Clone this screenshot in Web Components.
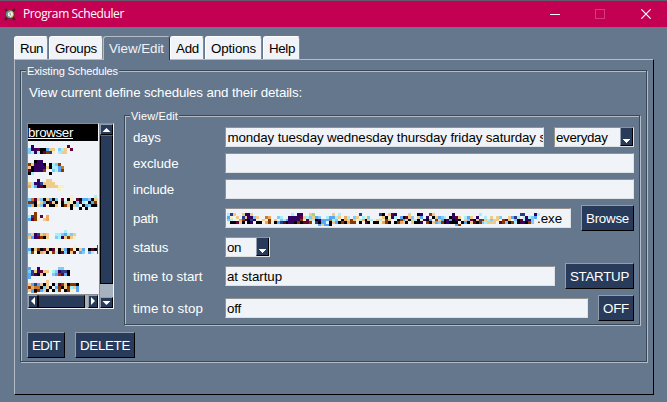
<!DOCTYPE html>
<html lang="en"><head><meta charset="utf-8"><title>Program Scheduler</title>
<style>
html,body{margin:0;height:100%;overflow:hidden}
body{background:#64778d;font:13.33px/16px "Liberation Sans",Arial,sans-serif;color:#fff}
</style></head><body>
<scheduler-window></scheduler-window>
<script>
const define=(name,html,ready)=>customElements.define(name,class extends HTMLElement{
  connectedCallback(){
    if(this.shadowRoot)return;
    this.attachShadow({mode:'open'}).innerHTML='<style>*{box-sizing:border-box}:host{box-sizing:border-box}</style>'+html;
    if(ready)ready(this,this.shadowRoot);
  }
});

// Text whose letter spacing is tuned to a given advance width
define('fit-text','<style>:host{display:inline-block;white-space:pre;flex:none}</style><span><slot></slot></span>',(h,r)=>{
  const s=r.querySelector('span'),w=+h.getAttribute('w'),n=h.textContent.length;
  if(w)s.style.letterSpacing=((w-s.getBoundingClientRect().width)/n)+'px';
});

// Coarse coloured blocks covering private names
const COLORS={k:'#000',p:'#320062',m:'#640032',b:'#8a3800',o:'#f0a860',t:'#f0cc88',y:'#f7f0c4',c:'#a8f0f8',s:'#58a8f8',n:'#283c88',g:'#a8d088',l:'#80ccf8',w:'#c87830'};
define('pixel-mosaic','<style>:host{display:block;flex:none}svg{display:block}</style>',(h,r)=>{
  const rows=h.getAttribute('rows').split('|'),ch=+(h.getAttribute('cell')||3);
  const W=Math.max(...rows.map(x=>x.length))*3,H=rows.length*ch;
  let s='';
  rows.forEach((row,y)=>[...row].forEach((c,x)=>{if(COLORS[c])s+=`<rect x="${x*3}" y="${y*ch}" width="3" height="${ch}" fill="${COLORS[c]}"/>`}));
  r.innerHTML+=`<svg width="${h.getAttribute('w')||W}" height="${H}" viewBox="0 0 ${W} ${H}" preserveAspectRatio="none" shape-rendering="crispEdges">${s}</svg>`;
});

define('title-bar',`<style>
:host{display:flex;height:27px;background:#c30052;border-top:1px solid #63596d;align-items:center;padding:0 16px 0 4px;font:12px/16px "Open Sans","Noto Sans",sans-serif}
.icon{margin-right:7px;margin-top:1px}.sp{flex:1}.ctl{margin-left:35px;flex:none}
</style>
<svg class="icon" width="12" height="13" viewBox="0 0 12 13"><path d="M1 1l3 3M11 1L8 4M1 12l3-3M11 12L8 9" stroke="#5b1434" stroke-width="2.4"/><circle cx="6" cy="6.3" r="4.6" fill="#50443a"/><circle cx="6" cy="6.3" r="3.7" fill="#d3bd50"/><path d="M2.3 6.3a3.7 3.7 0 0 1 3.7-3.7v7.4a3.7 3.7 0 0 1-3.7-3.7" fill="#4f93a3"/><circle cx="6.3" cy="6.3" r="2.5" fill="#f4f4f4"/><path d="M6 4.5v2l1.2 1" fill="none" stroke="#555" stroke-width=".8"/></svg>
<fit-text w="101">Program Scheduler</fit-text><span class="sp"></span>
<svg class="ctl" width="10" height="10"><path d="M0 5.5h10" stroke="#fff" shape-rendering="crispEdges"/></svg>
<svg class="ctl" width="10" height="10"><path d="M.5 .5h9v9h-9z" fill="none" stroke="#d43b7a" shape-rendering="crispEdges"/></svg>
<svg class="ctl" style="margin-left:36px" width="10" height="10"><path d="M.3 .3l9.4 9.4M9.7 .3L.3 9.7" stroke="#fff" stroke-width="1.2"/></svg>`);

define('note-tab',`<style>
:host{display:flex;height:23px;padding:1px 5px 0;align-items:center;background:#f0f3f7;color:#000;border:1px solid #fff;border-right-color:#858b92;border-bottom:0;border-radius:3px 3px 0 0;flex:none}
:host([active]){height:24px;margin-bottom:-1px;background:#64778d;color:#f0f3f7;border-color:#b2bbc6;border-right-color:#29323d;position:relative;padding-bottom:1px}
</style><slot></slot>`);

define('group-frame',`<style>
:host{display:block;border:1px solid #3b4855;box-shadow:inset 1px 1px #b2bbc6,1px 1px #b2bbc6}
.legend{font-size:11px;line-height:12px;height:12px;width:max-content;margin:-6px 0 0 5px;background:#64778d;padding:0 1px}
</style><div class="legend"><slot name="legend"></slot></div><slot></slot>`);

define('text-field',`<style>
:host{display:flex;align-items:center;height:20px;flex:1;min-width:0;overflow:hidden;background:#f0f3f7;color:#000;border:1px solid #929292;border-right-color:#dfe2e5;border-bottom-color:#dfe2e5;padding-left:1px}
::slotted(fit-text){margin-top:2px}
</style><slot></slot>`);

define('drop-down',`<style>
:host{display:flex;align-items:center;height:20px;flex:none;background:#f0f3f7;color:#000;border:1px solid #929292;border-right-color:#dfe2e5;border-bottom-color:#dfe2e5;padding-left:1px}
::slotted(fit-text){margin-top:2px}
.b{margin-left:auto;width:13px;height:18px;background:#283b5b;border-left:1px solid #939dac;border-right:1px solid #000;border-bottom:1px solid #000}
svg{display:block}
</style><slot></slot><span class="b"><svg width="11" height="17" shape-rendering="crispEdges"><path d="M2 11h7v1h-1v1h-1v1h-1v1h-1v-1h-1v-1h-1v-1h-1z" fill="#fff"/></svg></span>`);

define('push-button',`<style>
:host{display:flex;align-items:center;height:26px;padding:0 4px;flex:none;background:#283b5b;color:#fff;border:1px solid #939dac;border-right-color:#000;border-bottom-color:#000}
::slotted(fit-text){margin-top:2px}
</style><slot></slot>`);

define('form-row',`<style>
:host{display:flex;align-items:center;gap:10px}
.label{width:92px;height:16px;margin:2px -10px 0 0;flex:none;display:flex}
</style><span class="label"><slot name="label"></slot></span><slot></slot>`);

define('scroll-bar',`<style>
:host{display:flex;background:#a6b2be;border:1px solid #8b8d91;border-right-color:#f0f3f7;border-bottom-color:#f0f3f7}
:host([vertical]){flex-direction:column}
i{display:block;flex:none;background:#283b5b;border:1px solid #939dac;border-right-color:#000;border-bottom-color:#000}
.thumb{border-left-color:#000;border-top-color:#5b6a82}
svg{display:block}
</style>`,(h,r)=>{
  const v=h.hasAttribute('vertical'),t=+h.getAttribute('thumb');
  const st=n=>v?`width:13px;height:${n}px`:`height:13px;width:${n}px`;
  const a=v?['<svg width="11" height="9"><path d="M1.5 7L5.5 3L9.5 7z" fill="#fff"/></svg>','<svg width="11" height="9"><path d="M1.5 3L5.5 7L9.5 3z" fill="#fff"/></svg>']
           :['<svg width="8" height="10"><path d="M6 1L2 5L6 9z" fill="#fff"/></svg>','<svg width="8" height="10"><path d="M2 1L6 5L2 9z" fill="#fff"/></svg>'];
  const e=v?11:10;
  r.innerHTML+=`<i style="${st(e)}">${a[0]}</i><i class="thumb" style="${st(t)}"></i><span style="flex:1"></span><i style="${st(e)}">${a[1]}</i>`;
});

define('schedule-list',`<style>
:host{display:grid;grid-template-columns:72px 15px;width:87px;height:186px;color:#fff}
.left{display:flex;flex-direction:column;height:186px}
.items{height:171px;background:#f0f3f7;border:1px solid #8b8d91;border-right-color:#f0f3f7;border-bottom-color:#f0f3f7;overflow:hidden}
.sel{height:17px;background:#000;line-height:18px}
.sel fit-text{text-decoration:underline;text-underline-offset:1px;text-decoration-thickness:1px}
</style>
<div class="left"><div class="items">
<div class="sel"><fit-text w="45">browser</fit-text></div>
<pixel-mosaic style="margin-top:4px" rows=".p...........m|lppmkkstt.lct.m|lcpckmbny.ctt."></pixel-mosaic>
<pixel-mosaic style="margin-top:6px" rows="..kpp.......|btpppk.kclb.|tkpppptkccsw|mkpppb..lcsb|kc.....k...."></pixel-mosaic>
<pixel-mosaic style="margin-top:4px" rows="...p..tt...|tcppntttt..|ocspmkttttyy|..........y"></pixel-mosaic>
<pixel-mosaic style="margin-top:4px" rows="..............y.......c.|lwmtlktskl.m.ky.mksslktc|bnkytskmtkykctyklmcyksby|soktlpykkt.kbtktl.kslkkl|..............k..k.k..."></pixel-mosaic>
<pixel-mosaic style="margin-top:2px" rows="..b....|cnb.m.o|smby.to"></pixel-mosaic>
<pixel-mosaic style="margin-top:9px" rows="............c...|ltpntot..cclsclt|tspmbkt..lcptbty"></pixel-mosaic>
<pixel-mosaic style="margin-top:6px" rows="...............y.......b|sktbkmtkmyktskbykts.kmkb|cbykotkybckmlktm.sl.sc.b"></pixel-mosaic>
<pixel-mosaic style="margin-top:13px" rows="s..p......ll.|lntpmtt.clpnnk|snpktk..lsbmsk|s............"></pixel-mosaic>
<pixel-mosaic style="margin-top:1px" rows="......t...........|tsnstkt.kcmbtkbbk|bowwkltk.sbktbcts|tskbstk.kcb.kby.s|.sb.............."></pixel-mosaic>
</div><scroll-bar thumb="47" style="height:15px"></scroll-bar></div>
<scroll-bar vertical thumb="149"></scroll-bar>`);

define('details-form',`<style>
:host{display:flex;flex-direction:column;gap:6px;padding:5px 5px 3px 8px}
</style>
<form-row><fit-text slot="label" w="28">days</fit-text><text-field><fit-text w="318.5" style="margin-left:.5px">monday tuesday wednesday thursday friday saturday s</fit-text></text-field><drop-down style="width:80px"><fit-text w="51.5">everyday</fit-text></drop-down></form-row>
<form-row><fit-text slot="label" w="45.5">exclude</fit-text><text-field></text-field></form-row>
<form-row><fit-text slot="label" w="41">include</fit-text><text-field></text-field></form-row>
<form-row><fit-text slot="label" w="25">path</fit-text><text-field><pixel-mosaic style="margin:3px -6px 0 0" cell="2.75" w="316" rows="cnt..tppt.............c.pp..tg......t.c......n......nk.tmp....t..kp..bt......p........c.............nn...pc|sy.t.ntpplt..wo..lc..ppppmtcltsl..cssct.oc.lt.cyl...ytkypc.skmtl.ts.p.ktslc.kpmt.cst.p..c.t.tl..tsnc.cpcls|lc..obpknp..tyb.t.lcsppppbymtckpssswcl.kotbtycoktcytcybt..kbstktckypks.btskpskpk.tlmktnbtcltt.bmt.lkmcppl|ykkmtk.kp.kk.obyksnmkppkbkmmb.nkss.ktskbkobb.k.mk.kkyobk.kbotk.tkkp.bktslbkpkkk.ksktmkblcttt.mblkbckppkbl|...............................stssk..........................................sb............................"></pixel-mosaic><fit-text w="25">.exe</fit-text></text-field><push-button><fit-text w="43">Browse</fit-text></push-button></form-row>
<form-row><fit-text slot="label" w="35.5">status</fit-text><drop-down style="width:45px"><fit-text w="14">on</fit-text></drop-down></form-row>
<form-row><fit-text slot="label" w="69.5">time to start</fit-text><text-field><fit-text w="55">at startup</fit-text></text-field><push-button><fit-text w="59">STARTUP</fit-text></push-button></form-row>
<form-row><fit-text slot="label" w="70">time to stop</fit-text><text-field><fit-text w="14">off</fit-text></text-field><push-button><fit-text w="26">OFF</fit-text></push-button></form-row>`);

define('scheduler-window',`<style>
:host{display:flex;flex-direction:column;height:402px;background:#64778d}
.body{padding:9px 13px 7px 14px;flex:1;display:flex;flex-direction:column}
.tabs{display:flex;height:23px;gap:1px}
.page{flex:1;border:1px solid #b2bbc6;border-right-color:#000;border-bottom-color:#000;padding:10px 6px 0 5px}
.outer{height:292px;width:627px}
.desc{margin:8px 0 0 8px;height:16px}
.cols{display:flex;margin:22px 0 0 6px}
.inner{width:516px;height:210px;margin:-8px 0 0 10px}
.btns{display:flex;gap:10px;margin:7px 0 0 6px}
</style>
<title-bar></title-bar>
<div class="body"><div class="tabs">
<note-tab style="width:34px"><fit-text w="23">Run</fit-text></note-tab>
<note-tab style="width:54px"><fit-text w="42">Groups</fit-text></note-tab>
<note-tab active style="width:67px;margin-left:-1px"><fit-text w="55">View/Edit</fit-text></note-tab>
<note-tab style="width:34px;margin-left:-1px"><fit-text w="23">Add</fit-text></note-tab>
<note-tab style="width:57px"><fit-text w="45">Options</fit-text></note-tab>
<note-tab style="width:37px"><fit-text w="26">Help</fit-text></note-tab>
</div><div class="page"><group-frame class="outer"><fit-text slot="legend" w="91">Existing Schedules</fit-text>
<div class="desc"><fit-text w="273">View current define schedules and their details:</fit-text></div>
<div class="cols"><schedule-list></schedule-list><group-frame class="inner"><fit-text slot="legend" w="47">View/Edit</fit-text><details-form></details-form></group-frame></div>
<div class="btns"><push-button><fit-text w="28">EDIT</fit-text></push-button><push-button><fit-text w="50">DELETE</fit-text></push-button></div>
</group-frame></div></div>`);
</script></body></html>
